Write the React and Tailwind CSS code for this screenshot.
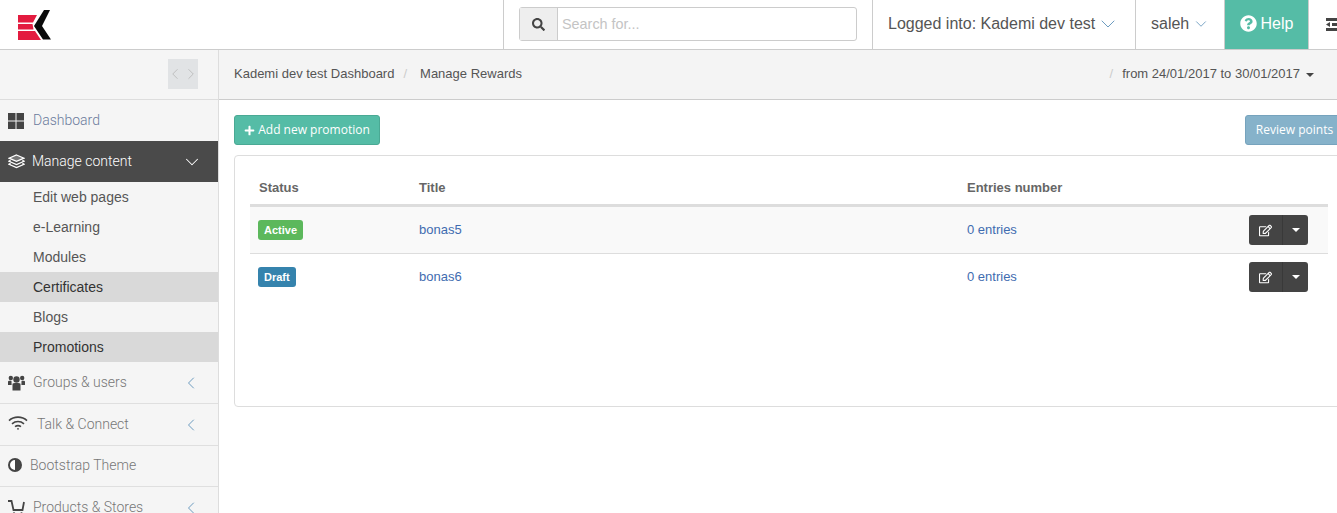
import React from 'react';
import { ChevronDown, ChevronLeft, ChevronRight } from 'lucide-react';
import { FaPlus, FaQuestionCircle, FaRegEdit, FaSearch } from 'react-icons/fa';

const roboto = "font-['Roboto',sans-serif]";
const arial = "font-['Liberation_Sans',Arial,sans-serif]";
const openSans = "font-['Open_Sans',sans-serif]";

// drawn in screen coordinates, the svg sits at x=16, y=6
const Logo = () => (
  <svg width="36" height="32" viewBox="16 6 36 32">
    <path d="M18 12H37L33 19.5H18Z" fill="#e31b3f" />
    <path d="M18 21H32.5L33.5 26.5H18Z" fill="#e31b3f" />
    <path d="M18 28H35L41 37H18Z" fill="#e31b3f" />
    <path d="M44 7H50L42 23L51 36.5H43L34 23Z" fill="#0a0a0a" />
  </svg>
);

const GridIcon = () => (
  <svg width="16" height="16" viewBox="0 0 16 16" fill="#444">
    <rect width="7.5" height="7.5" />
    <rect x="8.5" width="7.5" height="7.5" />
    <rect y="8.5" width="7.5" height="7.5" />
    <rect x="8.5" y="8.5" width="7.5" height="7.5" />
  </svg>
);

const LayersIcon = () => (
  <svg width="17" height="15" viewBox="0 0 17 15" fill="none" stroke="currentColor" strokeWidth="1.3">
    <path d="M8.5 1L16 4.2L8.5 7.4L1 4.2Z" fill="currentColor" fillOpacity="0.25" />
    <path d="M2.6 6.4L1 7.3L8.5 10.5L16 7.3L14.4 6.4" />
    <path d="M2.6 9.4L1 10.3L8.5 13.5L16 10.3L14.4 9.4" />
  </svg>
);

const UsersIcon = () => (
  <svg width="17" height="16" viewBox="0 0 17 16" fill="#444">
    <circle cx="8.5" cy="4.5" r="3.2" />
    <circle cx="2.8" cy="3" r="2.2" />
    <circle cx="14.2" cy="3" r="2.2" />
    <path d="M4.5 9C4.5 8 6 8 8.5 8S12.5 8 12.5 9V15.5H4.5Z" />
    <path d="M0 6.5C0 6 1.5 5.6 3.5 6L3.6 10H0Z" />
    <path d="M17 6.5C17 6 15.5 5.6 13.5 6L13.4 10H17Z" />
  </svg>
);

const WifiIcon = () => (
  <svg width="20" height="14" viewBox="0 0 20 14" fill="none" stroke="#444" strokeWidth="1.6" className="-mt-[3px]">
    <path d="M1 4.6C6 0 14 0 19 4.6" />
    <path d="M4 7.8C7.5 4.8 12.5 4.8 16 7.8" />
    <path d="M7 10.6C8.8 9.4 11.2 9.4 13 10.6" />
    <circle cx="10" cy="12.8" r="0.9" fill="#444" stroke="none" />
  </svg>
);

const HalfCircleIcon = () => (
  <svg width="14" height="14" viewBox="0 0 14 14">
    <circle cx="7" cy="7" r="6" fill="#fff" stroke="#444" strokeWidth="2" />
    <path d="M7 1A6 6 0 0 1 7 13Z" fill="#444" />
  </svg>
);

const CartIcon = () => (
  <svg width="17" height="15" viewBox="0 0 17 15" fill="none" stroke="#444" strokeWidth="1.8">
    <path d="M0 1H3.5L5.5 10H14.5L16 2" />
    <circle cx="6" cy="13.5" r="1.2" fill="#444" stroke="none" />
    <circle cx="13.5" cy="13.5" r="1.2" fill="#444" stroke="none" />
  </svg>
);

const OutdentIcon = () => (
  <svg width="16" height="14" viewBox="0 0 16 14" fill="#444">
    <rect width="16" height="3" />
    <rect x="6" y="5" width="10" height="3" />
    <rect y="10" width="16" height="3" />
    <path d="M4 4V9L0 6.5Z" />
  </svg>
);

const subItems = [
  { label: 'Edit web pages' },
  { label: 'e-Learning' },
  { label: 'Modules' },
  { label: 'Certificates', active: true },
  { label: 'Blogs' },
  { label: 'Promotions', active: true },
];

const SideItem = ({ icon, label, arrow, gap, height = 'h-[42px]' }) => (
  <div className={`${height} flex items-center pl-2 pr-[17px] border-b border-[#dfdfdf] text-[14px] text-[#777] font-light ${roboto}`}>
    <span className={`flex items-center ${gap} flex-1 whitespace-nowrap`}>
      {icon}
      {label}
    </span>
    {arrow && <ChevronLeft size={20} strokeWidth={1.2} className="shrink-0 text-[#6d9cc0]" />}
  </div>
);

const rows = [
  { status: 'Active', color: 'bg-[#5cb85c]', title: 'bonas5', striped: true },
  { status: 'Draft', color: 'bg-[#3583ad]', title: 'bonas6' },
];

const App = () => {
  return (
    <div className="w-[1337px] h-[513px] overflow-hidden bg-white flex flex-col">
      <header className="h-[50px] shrink-0 flex overflow-hidden border-b border-[#ccc] bg-white">
        <div className="w-[503px] shrink-0 flex items-center pl-4">
          <Logo />
        </div>
        <div className="w-[369px] shrink-0 border-l border-[#ccc] pl-[15px] pt-[7px]">
          <div className={`w-[338px] h-[34px] flex border border-[#ccc] rounded-[3px] text-[14.4px] ${arial}`}>
            <span className="w-[38px] flex items-center justify-center bg-[#eee] border-r border-[#ccc] text-[#444]">
              <FaSearch size={13} />
            </span>
            <span className="pl-1 leading-[32px] text-[#c4c4c4]">Search for...</span>
          </div>
        </div>
        <div className={`w-[263px] shrink-0 border-l border-[#ccc] flex items-center pl-[15px] pb-[2px] text-[16px] text-[#555] whitespace-nowrap ${arial}`}>
          Logged into: Kademi dev test
          <ChevronDown size={24} strokeWidth={1} className="shrink-0 ml-[1px] text-[#6d9cc0]" />
        </div>
        <div className={`w-[89px] shrink-0 border-l border-[#ccc] flex items-center pl-[15px] pb-[2px] gap-[3px] text-[16px] text-[#555] ${arial}`}>
          saleh
          <ChevronDown size={18} strokeWidth={1.2} className="shrink-0 text-[#6d9cc0]" />
        </div>
        <div className={`w-[85px] shrink-0 border-x border-[#ccc] bg-[#55bca6] flex items-center justify-center pb-[2px] gap-1 text-[16px] text-white ${arial}`}>
          <FaQuestionCircle size={17} />
          Help
        </div>
        <div className="w-[40px] shrink-0 flex items-center pl-[17px]">
          <OutdentIcon />
        </div>
      </header>

      <div className="flex-1 flex min-h-0">
        <aside className="w-[219px] shrink-0 border-r border-[#ddd] bg-[#f5f5f5] overflow-hidden">
          <div className="h-[50px] border-b border-[#ddd] flex justify-end items-start pt-[9px] pr-5">
            <div className="w-[30px] h-[30px] bg-[#e1e3e5] flex items-center justify-center text-[#bbb]">
              <ChevronLeft size={18} strokeWidth={1.2} className="shrink-0" />
              <ChevronRight size={18} strokeWidth={1.2} className="shrink-0 -ml-[2px]" />
            </div>
          </div>
          <div className={`h-[41px] flex items-center pl-2 gap-[9px] text-[14px] text-[#6b7b9c] font-light ${roboto}`}>
            <GridIcon />
            Dashboard
          </div>
          <div className={`h-[41px] flex items-center pl-2 pr-[20px] bg-[#4a4a4a] text-[14px] text-white font-light ${roboto}`}>
            <span className="flex-1 flex items-center gap-[7px]">
              <LayersIcon />
              Manage content
            </span>
            <ChevronDown size={22} strokeWidth={1.1} className="shrink-0 -mr-[5px]" />
          </div>
          {subItems.map((item) => (
            <div
              key={item.label}
              className={`h-[30px] pl-[33px] text-[14px] leading-[30px] ${item.active ? 'bg-[#d9d9d9] text-[#333]' : 'text-[#555]'} ${arial}`}
            >
              {item.label}
            </div>
          ))}
          <SideItem icon={<UsersIcon />} label="Groups & users" arrow gap="gap-2" />
          <SideItem icon={<WifiIcon />} label="Talk & Connect" arrow gap="gap-[9px]" />
          <SideItem icon={<HalfCircleIcon />} label="Bootstrap Theme" gap="gap-2" height="h-[41px] pb-[2px]" />
          <SideItem icon={<CartIcon />} label="Products & Stores" arrow gap="gap-2" />
        </aside>

        <main className="flex-1 min-w-0 overflow-hidden">
          <div className={`h-[50px] border-b border-[#ccc] bg-[#f4f4f4] flex items-center justify-between pl-[15px] pr-[23px] pb-[1px] text-[13px] text-[#555] ${arial}`}>
            <div className="flex items-center">
              <span>Kademi dev test Dashboard</span>
              <span className="pl-[9px] pr-[13px] text-[#ccc]">/</span>
              <span>Manage Rewards</span>
            </div>
            <div className="flex items-center">
              <span className="pr-[9px] text-[#ccc]">/</span>
              <span>from 24/01/2017 to 30/01/2017</span>
              <span className="ml-[6px] mt-[2px] border-x-[4px] border-t-[4px] border-x-transparent border-t-[#444]" />
            </div>
          </div>

          <div className="w-[1110px] ml-[15px] pt-[15px]">
            <div className={`flex justify-between text-[12px] ${openSans}`}>
              <button className="h-[30px] w-[146px] flex items-center justify-center gap-[3px] rounded-[3px] bg-[#55bca6] border border-[#4aa994] text-white">
                <FaPlus size={11} />
                Add new promotion
              </button>
              <button className="h-[30px] w-[99px] rounded-[3px] bg-[#86b2ca] border border-[#76a3bd] text-white">
                Review points
              </button>
            </div>

            <div className={`mt-[10px] h-[252px] border border-[#ddd] rounded-[4px] pl-[15px] pt-[14px] text-[13px] ${arial}`}>
              <div className="w-[1078px]">
                <div className="h-[37px] pt-[2px] flex items-center border-b-[3px] border-[#ddd] font-bold text-[#666]">
                  <span className="w-[169px] pl-[9px]">Status</span>
                  <span className="w-[548px]">Title</span>
                  <span>Entries number</span>
                </div>
                {rows.map((row) => (
                  <div
                    key={row.title}
                    className={`h-[47px] flex items-center border-b ${row.striped ? 'bg-[#f9f9f9] border-[#ddd]' : 'border-transparent'} text-[#3f6cb0]`}
                  >
                    <span className="w-[169px] pl-[8px]">
                      <span className={`inline-block h-5 leading-5 px-[6px] rounded-[3px] text-[11px] font-bold text-white align-middle ${row.color}`}>
                        {row.status}
                      </span>
                    </span>
                    <span className="w-[548px]">{row.title}</span>
                    <span className="flex-1">0 entries</span>
                    <span className="mr-5 flex h-[30px] w-[59px] rounded-[3px] bg-[#444] text-white">
                      <span className="w-[34px] flex items-center justify-center border-r border-[#393939]">
                        <FaRegEdit size={13} />
                      </span>
                      <span className="flex-1 flex items-center justify-center">
                        <span className="border-x-[4px] border-t-[4px] border-x-transparent border-t-white" />
                      </span>
                    </span>
                  </div>
                ))}
              </div>
            </div>
          </div>
        </main>
      </div>
    </div>
  );
};

export default App;
